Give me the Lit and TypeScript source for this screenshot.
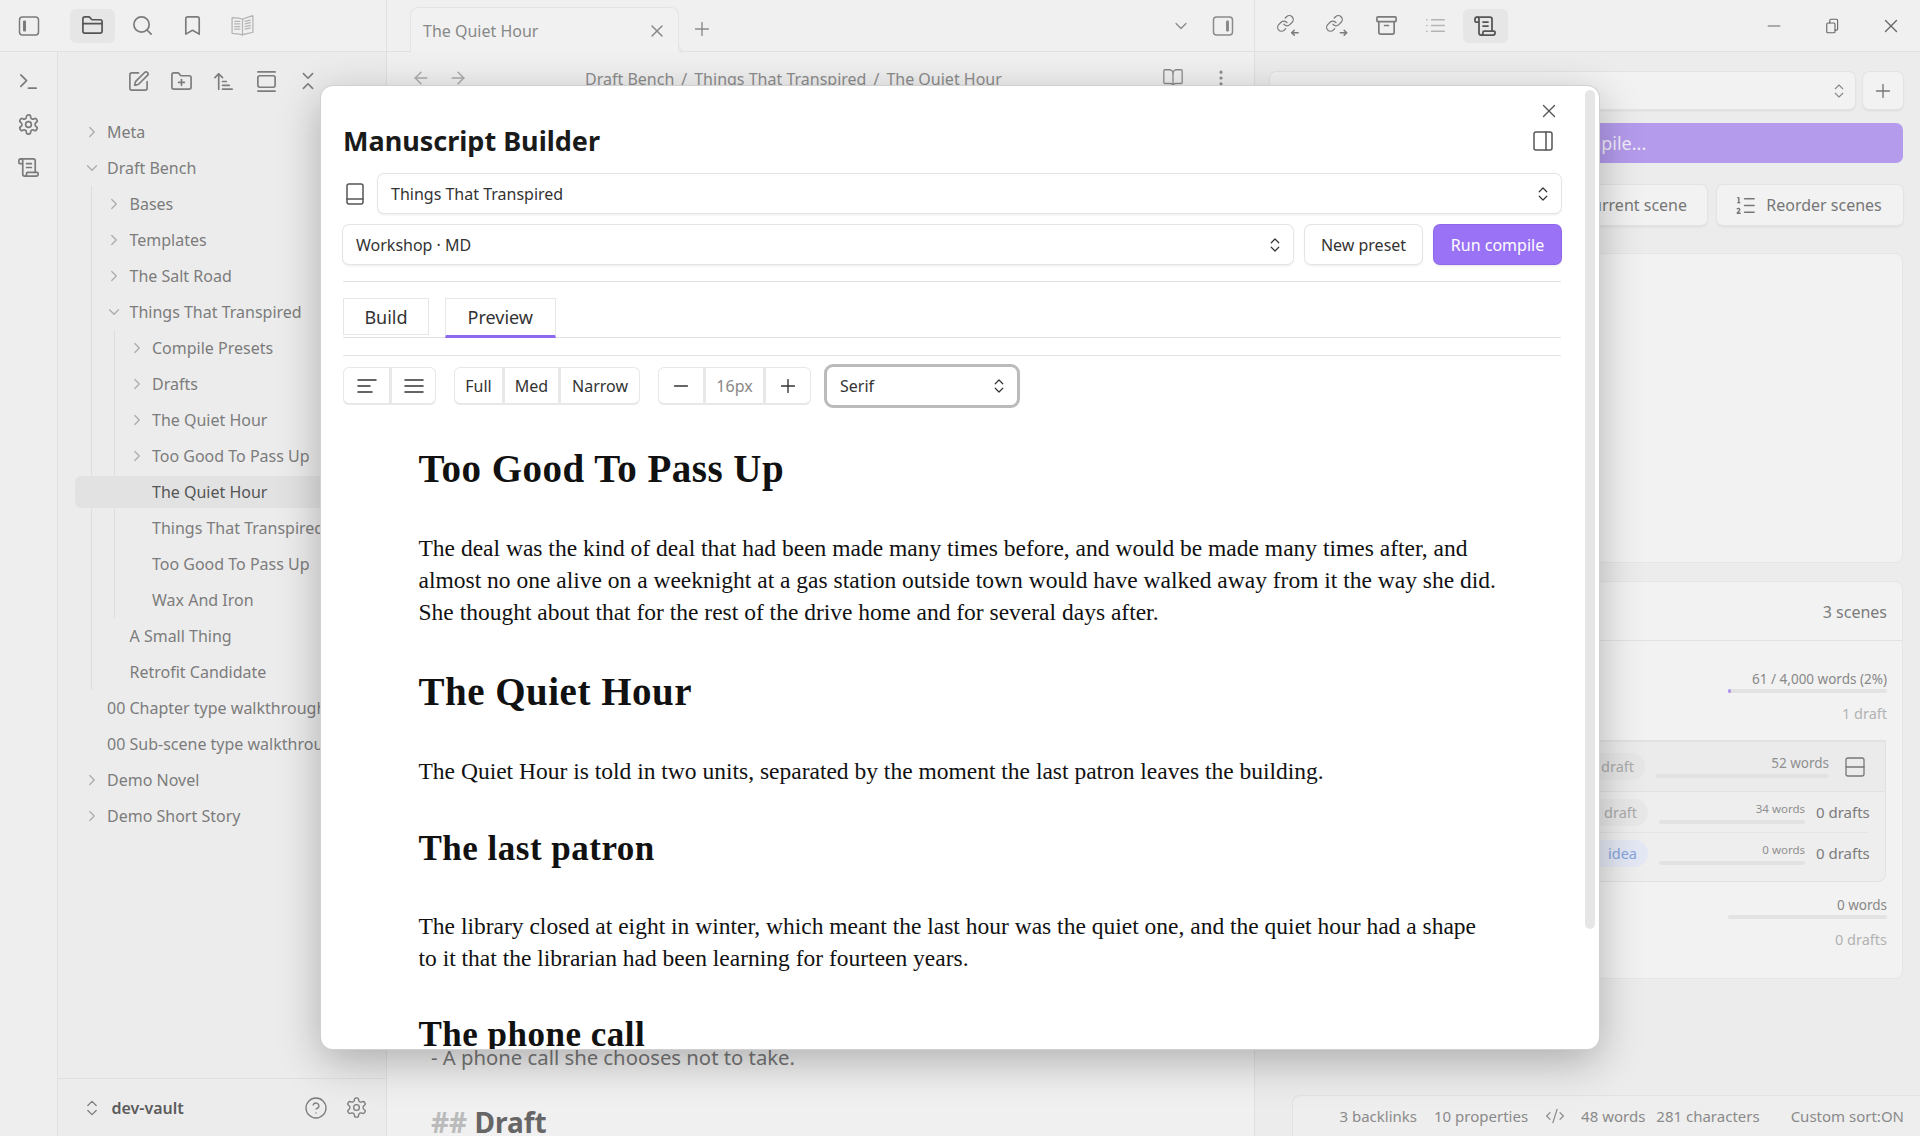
import { LitElement, html, css, svg, nothing } from "lit";
import { customElement } from "lit/decorators.js";

const p = (...ds: string[]) => ds.map((d) => svg`<path d=${d}></path>`);
const ic = (body: unknown, size = 22, sw = 1.75) => html`<svg
  width=${size}
  height=${size}
  viewBox="0 0 24 24"
  fill="none"
  stroke="currentColor"
  stroke-width=${sw}
  stroke-linecap="round"
  stroke-linejoin="round"
>${body}</svg>`;

const gearD =
  "M12.22 2h-.44a2 2 0 0 0-2 2v.18a2 2 0 0 1-1 1.73l-.43.25a2 2 0 0 1-2 0l-.15-.08a2 2 0 0 0-2.73.73l-.22.38a2 2 0 0 0 .73 2.73l.15.1a2 2 0 0 1 1 1.72v.51a2 2 0 0 1-1 1.74l-.15.09a2 2 0 0 0-.73 2.73l.22.38a2 2 0 0 0 2.73.73l.15-.08a2 2 0 0 1 2 0l.43.25a2 2 0 0 1 1 1.73V20a2 2 0 0 0 2 2h.44a2 2 0 0 0 2-2v-.18a2 2 0 0 1 1-1.73l.43-.25a2 2 0 0 1 2 0l.15.08a2 2 0 0 0 2.73-.73l.22-.39a2 2 0 0 0-.73-2.73l-.15-.08a2 2 0 0 1-1-1.74v-.5a2 2 0 0 1 1-1.74l.15-.09a2 2 0 0 0 .73-2.73l-.22-.38a2 2 0 0 0-2.73-.73l-.15.08a2 2 0 0 1-2 0l-.43-.25a2 2 0 0 1-1-1.73V4a2 2 0 0 0-2-2z";
const linkA = "M10 13a5 5 0 0 0 7.54.54l3-3a5 5 0 0 0-7.07-7.07l-1.72 1.71";
const linkB = "M14 11a5 5 0 0 0-7.54-.54l-3 3a5 5 0 0 0 7.07 7.07l1.71-1.71";

const I = {
  sideLeft: svg`<rect x="2.5" y="3" width="19" height="18" rx="3"></rect><rect x="6" y="6.5" width="3" height="11" rx="1" fill="currentColor" stroke="none"></rect>`,
  sideRight: svg`<rect x="2.5" y="3" width="19" height="18" rx="3"></rect><rect x="15" y="6.5" width="3" height="11" rx="1" fill="currentColor" stroke="none"></rect>`,
  folder: p(
    "M20 20a2 2 0 0 0 2-2V8a2 2 0 0 0-2-2h-7.9a2 2 0 0 1-1.69-.9L9.6 3.9A2 2 0 0 0 7.93 3H4a2 2 0 0 0-2 2v13a2 2 0 0 0 2 2Z",
    "M2 10h20"
  ),
  search: svg`<circle cx="11" cy="11" r="8"></circle><path d="m21 21-4.3-4.3"></path>`,
  bookmark: p("m19 21-7-4-7 4V5a2 2 0 0 1 2-2h10a2 2 0 0 1 2 2v16z"),
  bookLines: p(
    "M12 6v15",
    "M2 4.5c3.5 0 7.5.3 10 1.5 2.5-1.2 6.5-2.5 10-3.5v16c-3.5 1-7.5 1.5-10 2.5-2.5-1-6.5-1.5-10-1.5z",
    "M4.5 8h5M4.5 10.5h5M4.5 13h5M4.5 15.5h5M14.5 8l5-1.2M14.5 10.5l5-1.2M14.5 13l5-1.2M14.5 15.5l5-1.2"
  ),
  terminal: p("m4 17 6-6-6-6", "M12 19h8"),
  gear: svg`<path d=${gearD}></path><circle cx="12" cy="12" r="3"></circle>`,
  scroll: p(
    "M15 12h-5",
    "M15 8h-5",
    "M19 17V5a2 2 0 0 0-2-2H4",
    "M8 21h12a2 2 0 0 0 2-2v-1a1 1 0 0 0-1-1H11a1 1 0 0 0-1 1v1a2 2 0 1 1-4 0V5a2 2 0 1 0-4 0v2a1 1 0 0 0 1 1h3"
  ),
  edit: p(
    "M12 3H5a2 2 0 0 0-2 2v14a2 2 0 0 0 2 2h14a2 2 0 0 0 2-2v-7",
    "M18.375 2.625a1 1 0 0 1 3 3l-9.013 9.014a2 2 0 0 1-.853.505l-2.873.84a.5.5 0 0 1-.62-.62l.84-2.873a2 2 0 0 1 .506-.852z"
  ),
  folderPlus: p(
    "M12 10v6",
    "M9 13h6",
    "M20 20a2 2 0 0 0 2-2V8a2 2 0 0 0-2-2h-7.9a2 2 0 0 1-1.69-.9L9.6 3.9A2 2 0 0 0 7.93 3H4a2 2 0 0 0-2 2v13a2 2 0 0 0 2 2Z"
  ),
  sort: p("m3 8 4-4 4 4", "M7 4v16", "M11 12h4", "M11 16h7", "M11 20h10"),
  gallery: svg`<path d="M3 2h18"></path><rect x="3" y="6" width="18" height="12" rx="2"></rect><path d="M3 22h18"></path>`,
  collapse: p("m7 20 5-5 5 5", "m7 4 5 5 5-5"),
  right: p("m9 18 6-6-6-6"),
  down: p("m6 9 6 6 6-6"),
  updown: p("m7 15 5 5 5-5", "m7 9 5-5 5 5"),
  x: p("M18 6 6 18", "m6 6 12 12"),
  plus: p("M5 12h14", "M12 5v14"),
  minus: p("M5 12h14"),
  read: p(
    "M12 7v14",
    "M3 18a1 1 0 0 1-1-1V4a1 1 0 0 1 1-1h5a4 4 0 0 1 4 4 4 4 0 0 1 4-4h5a1 1 0 0 1 1 1v13a1 1 0 0 1-1 1h-6a3 3 0 0 0-3 3 3 3 0 0 0-3-3z"
  ),
  dots: svg`<circle cx="12" cy="5" r="1"></circle><circle cx="12" cy="12" r="1"></circle><circle cx="12" cy="19" r="1"></circle>`,
  back: p("m12 19-7-7 7-7", "M19 12H5"),
  fwd: p("M5 12h14", "m12 5 7 7-7 7"),
  linkIn: svg`<g transform="scale(.82)">${p(linkA, linkB)}</g>${p("M23 19.5h-6.5", "m19 17-2.5 2.5 2.5 2.5")}`,
  linkOut: svg`<g transform="scale(.82)">${p(linkA, linkB)}</g>${p("M16 19.5h6.5", "m20 17 2.5 2.5-2.5 2.5")}`,
  archive: svg`<rect x="2" y="3" width="20" height="5" rx="1"></rect>${p("M4 8v11a2 2 0 0 0 2 2h12a2 2 0 0 0 2-2V8", "M10 12h4")}`,
  list: p("M8 6h13", "M8 12h13", "M8 18h13", "M3 6h.01", "M3 12h.01", "M3 18h.01"),
  book: svg`<rect x="4" y="2" width="16" height="20" rx="2"></rect><path d="M4 17h16"></path>`,
  panelRight: svg`<rect x="3" y="3" width="18" height="18" rx="2"></rect><path d="M15 3v18"></path>`,
  alignLeft: p("M21 6H3", "M15 12H3", "M17 18H3"),
  alignFull: p("M21 6H3", "M21 12H3", "M21 18H3"),
  ordered: p(
    "M11 5h10",
    "M11 12h10",
    "M11 19h10",
    "M4 4h1v5",
    "M4 9h2",
    "M6.5 20H3.4c0-1 2.6-1.925 2.6-3.5a1.5 1.5 0 0 0-2.6-1.02"
  ),
  help: svg`<circle cx="12" cy="12" r="10"></circle>${p("M9.09 9a3 3 0 0 1 5.83 1c0 2-3 3-3 3", "M12 17h.01")}`,
  code: p("m18 16 4-4-4-4", "m6 8-4 4 4 4", "m14.5 4-5 16"),
  rows: svg`<rect x="3" y="3" width="18" height="18" rx="2"></rect><path d="M3 12h18"></path>`,
  restore: svg`<rect x="5" y="8" width="11" height="13" rx="1.5"></rect><path d="M9 8V4.5A1.5 1.5 0 0 1 10.5 3H18a1.5 1.5 0 0 1 1.5 1.5V16a1.5 1.5 0 0 1-1.5 1.5h-2"></path>`,
};

type Node = { n: string; open?: boolean; folder?: boolean; active?: boolean; kids?: Node[] };

const TREE: Node[] = [
  { n: "Meta", folder: true },
  {
    n: "Draft Bench",
    folder: true,
    open: true,
    kids: [
      { n: "Bases", folder: true },
      { n: "Templates", folder: true },
      { n: "The Salt Road", folder: true },
      {
        n: "Things That Transpired",
        folder: true,
        open: true,
        kids: [
          { n: "Compile Presets", folder: true },
          { n: "Drafts", folder: true },
          { n: "The Quiet Hour", folder: true },
          { n: "Too Good To Pass Up", folder: true },
          { n: "The Quiet Hour", active: true },
          { n: "Things That Transpired" },
          { n: "Too Good To Pass Up" },
          { n: "Wax And Iron" },
        ],
      },
      { n: "A Small Thing" },
      { n: "Retrofit Candidate" },
    ],
  },
  { n: "00 Chapter type walkthrough" },
  { n: "00 Sub-scene type walkthrough" },
  { n: "Demo Novel", folder: true },
  { n: "Demo Short Story", folder: true },
];

@customElement("app-root")
export class AppRoot extends LitElement {
  static styles = css`
    :host {
      display: block;
      width: 1920px;
      height: 1136px;
      position: relative;
      overflow: hidden;
      background: #f0f0f0;
      font-family: "Noto Sans", sans-serif;
      font-size: 16px;
      color: #777;
    }
    svg {
      display: block;
      flex-shrink: 0;
    }
    .top {
      display: flex;
      height: 52px;
      box-sizing: border-box;
    }
    .box {
      width: 45px;
      height: 34px;
      border-radius: 6px;
      display: flex;
      align-items: center;
      justify-content: center;
      color: #7b7b7b;
    }
    .box.on {
      background: #e6e6e6;
      color: #555;
    }
    .topl {
      width: 387px;
      flex-shrink: 0;
      box-sizing: border-box;
      border-bottom: 1px solid #e0e0e0;
      border-right: 1px solid #e0e0e0;
      display: flex;
      align-items: center;
      gap: 5px;
      padding-left: 6.5px;
    }
    .topl .box:first-child {
      margin-right: 13px;
    }
    .faint {
      color: #b4b4b4;
    }
    .topc {
      width: 868px;
      flex-shrink: 0;
      box-sizing: border-box;
      border-bottom: 1px solid #e0e0e0;
      border-right: 1px solid #e0e0e0;
      display: flex;
      align-items: flex-end;
      padding-left: 23px;
    }
    .tab {
      position: relative;
      width: 269px;
      height: 45px;
      margin-bottom: -1px;
      box-sizing: border-box;
      background: #f1f1f1;
      border: 1px solid #e4e4e4;
      border-bottom: none;
      border-radius: 8px 8px 0 0;
      display: flex;
      align-items: center;
      justify-content: space-between;
      padding: 2px 11px 0 12px;
      color: #888;
    }
    .tab::after {
      content: "";
      position: absolute;
      right: -9px;
      bottom: 0;
      width: 8px;
      height: 8px;
      border-left: 1px solid #e4e4e4;
      border-bottom: 1px solid #e4e4e4;
      border-bottom-left-radius: 8px;
      background: #f0f0f0;
    }
    .tabplus {
      margin: 0 0 11px 12px;
      color: #8a8a8a;
    }
    .tabend {
      margin-left: auto;
      display: flex;
      align-items: center;
      gap: 20px;
      padding: 0 19px 13px 0;
      color: #8a8a8a;
    }
    .topr {
      flex: 1;
      border-bottom: 1px solid #e0e0e0;
      display: flex;
      align-items: center;
      gap: 4.5px;
      padding-left: 9.5px;
    }
    .win {
      margin-left: auto;
      display: flex;
      align-items: center;
      color: #666;
    }
    .win span {
      width: 58.5px;
      display: flex;
      justify-content: center;
    }
    .main {
      display: flex;
      height: 1084px;
    }
    .ribbon {
      width: 58px;
      flex-shrink: 0;
      box-sizing: border-box;
      background: #eeeeee;
      border-right: 1px solid #e0e0e0;
      display: flex;
      flex-direction: column;
      align-items: center;
      padding-top: 18px;
      gap: 20px;
      color: #7b7b7b;
    }
    .side {
      width: 329px;
      flex-shrink: 0;
      box-sizing: border-box;
      background: #ececec;
      border-right: 1px solid #e0e0e0;
      display: flex;
      flex-direction: column;
      overflow: hidden;
    }
    .sidenav {
      height: 58px;
      flex-shrink: 0;
      display: flex;
      align-items: center;
      gap: 19.5px;
      padding: 0 0 4px 69px;
      color: #7d7d7d;
    }
    .tree {
      padding-left: 11.5px;
      white-space: nowrap;
    }
    .row {
      height: 36px;
      display: flex;
      align-items: center;
      color: #7c7c7c;
    }
    .row .arrow {
      width: 37.5px;
      flex-shrink: 0;
      color: #aaa;
      display: flex;
      justify-content: flex-start;
      padding-left: 13px;
      box-sizing: border-box;
    }
    .row.active {
      height: 32px;
      margin: 2px 0 2px -40px;
      padding-left: 40px;
      background: #e2e2e2;
      border-radius: 6px 0 0 6px;
      color: #555;
    }
    .kids {
      margin-left: 21.5px;
      border-left: 1.5px solid #dedede;
    }
    .sidefoot {
      margin-top: auto;
      height: 57px;
      flex-shrink: 0;
      border-top: 1px solid #e0e0e0;
      display: flex;
      align-items: center;
      padding: 0 18px 0 23.5px;
      color: #7c7c7c;
    }
    .vault {
      margin-left: 10px;
      font-weight: 600;
      color: #5c5c5c;
      flex: 1;
    }
    .sidefoot svg + .vault + svg {
      margin-right: 17px;
    }
    .center {
      width: 868px;
      flex-shrink: 0;
      box-sizing: border-box;
      background: #f0f0f0;
      border-right: 1px solid #e0e0e0;
      overflow: hidden;
    }
    .nav {
      height: 52px;
      display: flex;
      align-items: center;
      padding: 0 23px 0 24px;
      color: #aaa;
      gap: 17px;
    }
    .crumbs {
      margin-left: 100px;
      padding-top: 2px;
      color: #8c8c8c;
      display: flex;
      gap: 7px;
    }
    .navend {
      margin-left: auto;
      display: flex;
      gap: 27px;
      color: #8a8a8a;
      align-items: center;
    }
    .note {
      margin: 940px 0 0 44px;
      line-height: 26px;
      color: #777;
      font-size: 20.3px;
    }
    .note2 {
      margin: 33px 0 0 44px;
      font-size: 28px;
      font-weight: 700;
      line-height: 38px;
      color: #666;
      white-space: nowrap;
    }
    .note2 span {
      color: #bbb;
    }
    .right {
      flex: 1;
      min-width: 0;
      background: #ececec;
      display: flex;
      flex-direction: column;
    }
    .rbody {
      padding: 20px 17px 0 15px;
      display: flex;
      flex-direction: column;
    }
    .btn {
      background: #f2f2f2;
      border-radius: 6px;
      box-shadow: 0 0 0 1px #e3e3e3, 0 2px 3px rgba(0, 0, 0, 0.07);
      display: flex;
      align-items: center;
      justify-content: center;
      box-sizing: border-box;
    }
    .rsel {
      display: flex;
      gap: 8px;
      height: 37px;
    }
    .rsel .btn:first-child {
      flex: 1;
      justify-content: space-between;
      padding: 0 7px 0 24px;
      color: #888;
    }
    .rsel .btn:last-child {
      width: 40px;
      color: #777;
    }
    .compile {
      margin-top: 14px;
      height: 40px;
      border-radius: 7px;
      background: #b49bec;
      color: #f2eefc;
      display: flex;
      align-items: center;
      justify-content: center;
      font-size: 18px;
    }
    .rbtns {
      margin-top: 22px;
      display: flex;
      gap: 10px;
      height: 40px;
      color: #777;
    }
    .rbtns .btn:first-child {
      flex: 1;
      justify-content: flex-end;
      padding-right: 20px;
    }
    .rbtns .btn:last-child {
      width: 186px;
      gap: 9px;
      padding-right: 4px;
    }
    .card {
      background: #f2f2f2;
      border: 1px solid #e6e6e6;
      border-radius: 8px;
      box-sizing: border-box;
    }
    .c1 {
      margin-top: 28px;
      height: 310px;
    }
    .c2 {
      margin-top: 18px;
      height: 398px;
      display: flex;
      flex-direction: column;
    }
    .chead {
      height: 59px;
      flex-shrink: 0;
      border-bottom: 1px solid #e2e2e2;
      box-sizing: border-box;
      display: flex;
      align-items: center;
      justify-content: flex-end;
      padding: 2px 15px 0 0;
      color: #7c7c7c;
    }
    .stat {
      width: 159px;
      margin: 0 15px 0 auto;
      text-align: right;
      font-size: 13.5px;
      color: #888;
      line-height: 20px;
    }
    .bar {
      height: 4px;
      border-radius: 2px;
      background: #e3e3e3;
      position: relative;
    }
    .bar i {
      display: block;
      height: 4px;
      border-radius: 2px;
      background: #b094ec;
    }
    .stat .dr {
      font-size: 14.5px;
      color: #b2b2b2;
      margin-top: 10px;
      line-height: 20px;
    }
    .s1 {
      padding-top: 28px;
      height: 99px;
      box-sizing: border-box;
    }
    .s2 {
      padding-top: 13px;
    }
    .nest {
      margin-right: 16px;
      height: 142px;
      box-sizing: border-box;
      background: #eeeeee;
      border: 1px solid #e2e2e2;
      border-top-width: 2px;
      border-radius: 0 0 8px 0;
    }
    .nrow {
      display: flex;
      justify-content: flex-end;
      align-items: center;
    }
    .n1 {
      height: 50px;
      background: #ebebeb;
      border-bottom: 1px solid #e2e2e2;
      padding-right: 18px;
      box-sizing: border-box;
    }
    .n1 .chip {
      margin-top: -1px;
      background: #e6e6e6;
    }
    .n2 {
      height: 40px;
      padding-right: 16px;
      box-sizing: border-box;
    }
    .chip {
      height: 27px;
      border-radius: 14px;
      background: #e8e8e8;
      color: #ababab;
      display: flex;
      align-items: center;
      padding: 0 11px 0 40px;
      font-size: 14.5px;
      margin-right: 11px;
    }
    .chip.blue {
      background: #e3e8f4;
      color: #86a4dc;
    }
    .wbox {
      text-align: right;
      font-size: 12px;
      color: #8f8f8f;
      line-height: 16px;
    }
    .wbox.w1 {
      width: 173px;
      font-size: 13.5px;
      margin-right: 14px;
    }
    .wbox.w2 {
      width: 146px;
      font-size: 11.5px;
      margin-right: 11px;
    }
    .wbox .bar {
      background: #e2e2e2;
      margin-top: 3px;
    }
    .dcount {
      font-size: 15px;
      color: #7c7c7c;
      width: 53px;
      white-space: nowrap;
      text-align: right;
    }
    .sep {
      height: 1px;
      background: #e4e4e4;
      margin: 0 16px 0 0;
    }
    .status {
      margin: auto 0 0 37px;
      height: 41px;
      box-sizing: border-box;
      background: #eeeeee;
      border: 1px solid #e2e2e2;
      border-width: 1px 0 0 1px;
      border-radius: 8px 0 0 0;
      display: flex;
      align-items: center;
      justify-content: flex-end;
      padding-right: 16px;
      font-size: 15px;
      color: #8a8a8a;
      white-space: nowrap;
    }
    .status span {
      margin-left: 17px;
    }
    .status span.chars {
      margin-left: 11px;
    }
    .status span.sort {
      margin-left: 31px;
    }
    .status svg {
      margin-left: 17px;
      margin-right: -1px;
    }

    /* modal */
    .modal {
      position: absolute;
      left: 321px;
      top: 86px;
      width: 1278px;
      height: 963px;
      box-sizing: border-box;
      background: #fff;
      border-radius: 12px;
      box-shadow: 0 0 0 1px #d0d0d0, 0 12px 44px rgba(0, 0, 0, 0.28);
      padding: 38px 38px 0 22px;
      overflow: hidden;
      color: #222;
    }
    .scroll {
      position: absolute;
      left: 1264px;
      top: 4px;
      width: 10px;
      height: 839px;
      border-radius: 5px;
      background: #e6e6e6;
    }
    .mx {
      position: absolute;
      left: 1217px;
      top: 14px;
      color: #555;
    }
    .mpanel {
      position: absolute;
      left: 1210px;
      top: 43px;
      color: #555;
    }
    h1.title {
      margin: 0;
      font-size: 27px;
      line-height: 34px;
      font-weight: 700;
      color: #1a1a1a;
    }
    .r1 {
      margin-top: 16px;
      display: flex;
      align-items: center;
      gap: 11px;
      color: #555;
    }
    .sel {
      flex: 1;
      height: 39px;
      box-sizing: border-box;
      background: #fff;
      border-radius: 6px;
      box-shadow: 0 0 0 1px #e4e4e4, 0 2px 3px rgba(0, 0, 0, 0.08);
      display: flex;
      align-items: center;
      justify-content: space-between;
      padding: 0 9px 0 13px;
      color: #333;
    }
    .r2 {
      margin-top: 12px;
      display: flex;
      gap: 12px;
    }
    .mbtn {
      height: 39px;
      box-sizing: border-box;
      background: #fff;
      border-radius: 6px;
      box-shadow: 0 0 0 1px #e4e4e4, 0 2px 3px rgba(0, 0, 0, 0.08);
      display: flex;
      align-items: center;
      justify-content: center;
      color: #333;
    }
    .mbtn.new {
      width: 117px;
    }
    .mbtn.run {
      width: 127px;
      background: #9a72f5;
      color: #fff;
      box-shadow: 0 0 0 1px #8f67ea, 0 2px 3px rgba(0, 0, 0, 0.1);
    }
    .hr {
      height: 1px;
      background: #e3e3e3;
    }
    .tabs {
      margin-top: 16px;
      height: 40px;
      box-sizing: border-box;
      border-bottom: 1px solid #e3e3e3;
      display: flex;
      gap: 16px;
      font-size: 18px;
    }
    .mtab {
      height: 37px;
      box-sizing: border-box;
      border: 1px solid #e6e6e6;
      display: flex;
      align-items: center;
      justify-content: center;
      color: #333;
    }
    .mtab.b {
      width: 86px;
    }
    .mtab.pv {
      width: 110.5px;
      height: 40px;
      padding-bottom: 1px;
      border-bottom: 3px solid #8f68f0;
    }
    .tools {
      margin-top: 11px;
      display: flex;
      align-items: center;
      gap: 18px;
      height: 38px;
    }
    .grp {
      height: 38px;
      box-sizing: border-box;
      background: #e8e8e8;
      border-radius: 6px;
      padding: 1px 1px 2px;
      display: flex;
      gap: 3px;
    }
    .grp > span {
      background: #fff;
      display: flex;
      align-items: center;
      justify-content: center;
      color: #333;
    }
    .grp > span:first-child {
      border-radius: 5px 0 0 5px;
    }
    .grp > span:last-child {
      border-radius: 0 5px 5px 0;
    }
    .grp > span.v {
      color: #888;
    }
    .fsel {
      width: 190px;
      height: 38px;
      margin-left: -2px;
      box-sizing: border-box;
      border-radius: 6px;
      outline: 3px solid #bbbbbb;
      display: flex;
      align-items: center;
      justify-content: space-between;
      padding: 0 9px 0 13px;
      color: #333;
      background: #fff;
    }
    .doc {
      margin-left: 75.5px;
      font-family: "Liberation Serif", serif;
      color: #111;
      white-space: nowrap;
    }
    .doc h2 {
      margin: 0;
      font-weight: 700;
      letter-spacing: 0.5px;
    }
    .doc .h1 {
      font-size: 39px;
      line-height: 44px;
    }
    .doc .h3 {
      font-size: 35px;
      line-height: 36px;
    }
    .doc p {
      margin: 0;
      font-size: 23.5px;
      line-height: 32px;
    }
  `;

  private renderNodes(nodes: Node[]): unknown {
    return nodes.map(
      (x) => html`
        <div class="row ${x.active ? "active" : ""}">
          <span class="arrow">${x.folder ? ic(x.open ? I.down : I.right, 18, 1.6) : nothing}</span>
          <span>${x.n}</span>
        </div>
        ${x.kids ? html`<div class="kids">${this.renderNodes(x.kids)}</div>` : nothing}
      `
    );
  }

  render() {
    return html`
      <div class="top">
        <div class="topl">
          <span class="box">${ic(I.sideLeft, 24, 1.5)}</span>
          <span class="box on">${ic(I.folder, 23)}</span>
          <span class="box">${ic(I.search, 23)}</span>
          <span class="box">${ic(I.bookmark, 23)}</span>
          <span class="box faint">${ic(I.bookLines, 25, 1.2)}</span>
        </div>
        <div class="topc">
          <div class="tab"><span>The Quiet Hour</span>${ic(I.x, 20)}</div>
          <span class="tabplus">${ic(I.plus, 22, 1.5)}</span>
          <div class="tabend">${ic(I.down, 20, 1.5)}${ic(I.sideRight, 24, 1.5)}</div>
        </div>
        <div class="topr">
          <span class="box">${ic(I.linkIn, 23, 1.6)}</span>
          <span class="box">${ic(I.linkOut, 23, 1.6)}</span>
          <span class="box">${ic(I.archive, 23)}</span>
          <span class="box faint">${ic(I.list, 23)}</span>
          <span class="box on">${ic(I.scroll, 24)}</span>
          <div class="win">
            <span>${ic(I.minus, 20, 1.4)}</span>
            <span>${ic(I.restore, 18, 1.5)}</span>
            <span>${ic(I.x, 22, 1.5)}</span>
          </div>
        </div>
      </div>
      <div class="main">
        <div class="ribbon">
          ${ic(I.terminal, 23)}${ic(I.gear, 23)}${ic(I.scroll, 23)}
        </div>
        <div class="side">
          <div class="sidenav">
            ${ic(I.edit, 23)}${ic(I.folderPlus, 23)}${ic(I.sort, 23)}${ic(I.gallery, 23)}${ic(I.collapse, 22)}
          </div>
          <div class="tree">${this.renderNodes(TREE)}</div>
          <div class="sidefoot">
            ${ic(I.updown, 20, 1.5)}
            <span class="vault">dev-vault</span>
            ${ic(I.help, 24, 1.3)}${ic(I.gear, 23, 1.4)}
          </div>
        </div>
        <div class="center">
          <div class="nav">
            ${ic(I.back, 20)}${ic(I.fwd, 20)}
            <div class="crumbs">
              <span>Draft Bench</span><span>/</span><span>Things That Transpired</span><span>/</span><span>The Quiet Hour</span>
            </div>
            <div class="navend">${ic(I.read, 22, 1.4)}${ic(I.dots, 20)}</div>
          </div>
          <div class="note">- A phone call she chooses not to take.</div>
          <div class="note2"><span>##</span> Draft</div>
        </div>
        <div class="right">
          <div class="rbody">
            <div class="rsel">
              <div class="btn"><span>Things That Transpired</span>${ic(I.updown, 18, 1.5)}</div>
              <div class="btn">${ic(I.plus, 22, 1.5)}</div>
            </div>
            <div class="compile">Run compile...</div>
            <div class="rbtns">
              <div class="btn">Compile current scene</div>
              <div class="btn">${ic(I.ordered, 23, 1.5)}<span>Reorder scenes</span></div>
            </div>
            <div class="card c1"></div>
            <div class="card c2">
              <div class="chead">3 scenes</div>
              <div class="s1">
                <div class="stat">
                  <div>61 / 4,000 words (2%)</div>
                  <div class="bar"><i style="width:3px"></i></div>
                  <div class="dr">1 draft</div>
                </div>
              </div>
              <div class="nest">
                <div class="nrow n1">
                  <div class="chip">draft</div>
                  <div class="wbox w1">52 words<div class="bar"></div></div>
                  ${ic(I.rows, 24, 1.3)}
                </div>
                <div class="nrow n2">
                  <div class="chip">draft</div>
                  <div class="wbox w2">34 words<div class="bar"></div></div>
                  <div class="dcount">0 drafts</div>
                </div>
                <div class="sep"></div>
                <div class="nrow n2">
                  <div class="chip blue">idea</div>
                  <div class="wbox w2">0 words<div class="bar"></div></div>
                  <div class="dcount">0 drafts</div>
                </div>
              </div>
              <div class="s2">
                <div class="stat">
                  <div>0 words</div>
                  <div class="bar"></div>
                  <div class="dr">0 drafts</div>
                </div>
              </div>
            </div>
          </div>
          <div class="status">
            <span>3 backlinks</span><span>10 properties</span>${ic(I.code, 20, 1.5)}<span>48 words</span
            ><span class="chars">281 characters</span><span class="sort">Custom sort:ON</span>
          </div>
        </div>
      </div>

      <div class="modal">
        <div class="scroll"></div>
        <div class="mx">${ic(I.x, 22, 1.5)}</div>
        <div class="mpanel">${ic(I.panelRight, 24, 1.5)}</div>
        <h1 class="title">Manuscript Builder</h1>
        <div class="r1">
          ${ic(I.book, 24, 1.5)}
          <div class="sel"><span>Things That Transpired</span>${ic(I.updown, 18, 1.6)}</div>
        </div>
        <div class="r2">
          <div class="sel"><span>Workshop · MD</span>${ic(I.updown, 18, 1.6)}</div>
          <div class="mbtn new">New preset</div>
          <div class="mbtn run">Run compile</div>
        </div>
        <div class="hr" style="margin-top:17px"></div>
        <div class="tabs">
          <div class="mtab b">Build</div>
          <div class="mtab pv">Preview</div>
        </div>
        <div class="hr" style="margin-top:17px"></div>
        <div class="tools">
          <div class="grp">
            <span style="width:45px">${ic(I.alignLeft, 24, 1.5)}</span>
            <span style="width:43px">${ic(I.alignFull, 24, 1.5)}</span>
          </div>
          <div class="grp">
            <span style="width:47px">Full</span>
            <span style="width:53px">Med</span>
            <span style="width:78px">Narrow</span>
          </div>
          <div class="grp">
            <span style="width:44px">${ic(I.minus, 22, 1.5)}</span>
            <span class="v" style="width:57px">16px</span>
            <span style="width:44px">${ic(I.plus, 22, 1.5)}</span>
          </div>
          <div class="fsel"><span>Serif</span>${ic(I.updown, 18, 1.6)}</div>
        </div>
        <div class="doc">
          <h2 class="h1" style="margin-top:42px">Too Good To Pass Up</h2>
          <p style="margin-top:41px">
            The deal was the kind of deal that had been made many times before, and would be made many times after, and<br />almost
            no one alive on a weeknight at a gas station outside town would have walked away from it the way she did.<br />She
            thought about that for the rest of the drive home and for several days after.
          </p>
          <h2 class="h1" style="margin-top:42px">The Quiet Hour</h2>
          <p style="margin-top:41px">The Quiet Hour is told in two units, separated by the moment the last patron leaves the building.</p>
          <h2 class="h3" style="margin-top:44px">The last patron</h2>
          <p style="margin-top:43px">
            The library closed at eight in winter, which meant the last hour was the quiet one, and the quiet hour had a shape<br />to
            it that the librarian had been learning for fourteen years.
          </p>
          <h2 class="h3" style="margin-top:43px">The phone call</h2>
        </div>
      </div>
    `;
  }
}
